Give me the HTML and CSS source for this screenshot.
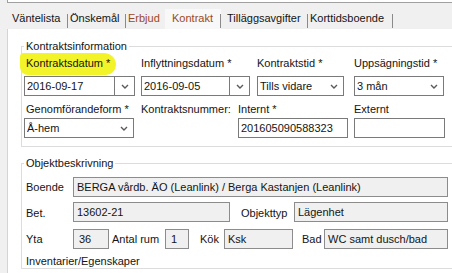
FILE: index.html
```html
<!DOCTYPE html>
<html>

<head>
  <title>Kontrakt</title>
  <link rel="stylesheet" href="styles.css">
</head>

<body>

  <div class="topbar"></div>

  <nav class="tabs">
    <span class="tab tab-wait">Väntelista</span>
    <span class="tab tab-wish">Önskemål</span>
    <span class="tab tab-offer tab-flag">Erbjud</span>
    <span class="tab tab-contract tab-flag tab-active">Kontrakt</span>
    <span class="tab tab-fees">Tilläggsavgifter</span>
    <span class="tab tab-short">Korttidsboende</span>
  </nav>

  <main class="panel">

    <fieldset class="group group-contract">
      <legend>Kontraktsinformation</legend>

      <div class="row row-top">
        <div class="field f-date">
          <label class="first"><span class="marker">Kontraktsdatum *</span></label>
          <div class="combo combo-split">
            <span class="value">2016-09-17</span>
            <span class="drop"><svg width="8" height="5" viewBox="0 0 8 5"><polyline points="1,1 4,4 7,1" /></svg></span>
          </div>
        </div>
        <div class="field f-move">
          <label>Inflyttningsdatum *</label>
          <div class="combo combo-split">
            <span class="value">2016-09-05</span>
            <span class="drop"><svg width="8" height="5" viewBox="0 0 8 5"><polyline points="1,1 4,4 7,1" /></svg></span>
          </div>
        </div>
        <div class="field f-term">
          <label>Kontraktstid *</label>
          <div class="combo">
            <span class="value">Tills vidare</span>
            <span class="drop"><svg width="8" height="5" viewBox="0 0 8 5"><polyline points="1,1 4,4 7,1" /></svg></span>
          </div>
        </div>
        <div class="field f-notice">
          <label>Uppsägningstid *</label>
          <div class="combo">
            <span class="value">3 mån</span>
            <span class="drop"><svg width="8" height="5" viewBox="0 0 8 5"><polyline points="1,1 4,4 7,1" /></svg></span>
          </div>
        </div>
      </div>

      <div class="row row-bottom">
        <div class="field f-form">
          <label class="first">Genomförandeform *</label>
          <div class="combo">
            <span class="value">Å-hem</span>
            <span class="drop"><svg width="8" height="5" viewBox="0 0 8 5"><polyline points="1,1 4,4 7,1" /></svg></span>
          </div>
        </div>
        <div class="field f-number">
          <label>Kontraktsnummer:</label>
        </div>
        <div class="field f-internal">
          <label>Internt *</label>
          <div class="text">201605090588323</div>
        </div>
        <div class="field f-external">
          <label>Externt</label>
          <div class="text"></div>
        </div>
      </div>
    </fieldset>

    <fieldset class="group group-object">
      <legend>Objektbeskrivning</legend>

      <div class="orow">
        <span class="olabel">Boende</span>
        <div class="ro w-home">BERGA vårdb. ÄO (Leanlink) / Berga Kastanjen (Leanlink)</div>
      </div>

      <div class="orow orow-bet">
        <span class="olabel">Bet.</span>
        <div class="ro w-bet">13602-21</div>
        <span class="olabel l-type">Objekttyp</span>
        <div class="ro w-type">Lägenhet</div>
      </div>

      <div class="orow orow-size">
        <span class="olabel">Yta</span>
        <div class="ro w-area">36</div>
        <span class="olabel l-rooms">Antal rum</span>
        <div class="ro w-rooms">1</div>
        <span class="olabel l-kitchen">Kök</span>
        <div class="ro w-kitchen">Ksk</div>
        <span class="olabel l-bath">Bad</span>
        <div class="ro w-bath">WC samt dusch/bad</div>
      </div>

      <div class="olabel extra">Inventarier/Egenskaper</div>
    </fieldset>

  </main>

</body>

</html>
```

FILE: styles.css
```css
body {
  margin: 0;
  width: 452px;
  height: 273px;
  overflow: hidden;
  background: #f0f0f0;
  color: #141414;
  font-family: "Liberation Sans", Arial, sans-serif;
  font-size: 11px;
  line-height: 13px;
}

.topbar {
  height: 2px;
  margin-left: 7px;
  background: #fff;
  border-left: 1px solid #a0a0a0;
  border-bottom: 1px solid #a0a0a0;
}

/* tab strip */

.tabs {
  display: flex;
  height: 20px;
  margin-top: 6px;
  padding-left: 10px;
}

.tab {
  box-sizing: border-box;
  height: 20px;
  padding: 3px 0 0 2px;
  white-space: nowrap;
  background: linear-gradient(#8a8a8a, #8a8a8a) right 5px / 1px 14px no-repeat;
}

.tab-wait {
  width: 58px;
}

.tab-wish {
  width: 58px;
}

.tab-offer {
  width: 39px;
  background: none;
}

.tab-contract {
  width: 56px;
  padding-left: 7px;
}

.tab-fees {
  width: 87px;
  padding-left: 6px;
}

.tab-short {
  width: 85px;
}

.tab-flag {
  color: #9a4a1c;
}

.tab-active {
  background-color: #f8f8f8;
}

/* content panel */

.panel {
  height: 244px;
  margin-left: 7px;
  padding: 11px 0 0 13px;
  background: #fff;
  border-left: 1px solid #d4d4d4;
}

.group {
  margin: 0;
  padding: 4px 0 8px 2px;
  border: 1px solid #dcdcdc;
  border-right: none;
  min-width: 0;
}

.group legend {
  padding: 0 2px;
}

.group-object {
  margin-top: 10px;
  padding: 7px 0 0 2px;
}

/* Kontraktsinformation */

.row {
  display: flex;
}

.row-bottom {
  margin-top: 7px;
}

.field label {
  display: block;
  white-space: nowrap;
}

.row-top label {
  margin-bottom: 6px;
}

.row-bottom label {
  margin-bottom: 2px;
}

.field label.first {
  padding-left: 2px;
}

.marker {
  display: inline-block;
  margin: -4px -6px -5px -6px;
  padding: 4px 6px 5px 6px;
  background: #f3f32a;
  border-radius: 4px 12px 10px 8px;
}

.f-date {
  width: 111px;
  margin-right: 6px;
}

.f-move {
  width: 109px;
  margin-right: 7px;
}

.f-term {
  width: 87px;
  margin-right: 10px;
}

.f-notice {
  width: 90px;
}

.f-form {
  width: 110px;
  margin-right: 7px;
}

.f-number {
  width: 97px;
}

.f-internal {
  width: 110px;
  margin-right: 6px;
}

.f-external {
  width: 91px;
}

.combo {
  display: flex;
  box-sizing: border-box;
  height: 20px;
  border: 1px solid #7a7a7a;
  background: #fff;
}

.combo .value {
  flex: 1;
  padding-left: 2px;
  line-height: 18px;
  white-space: nowrap;
}

.combo .drop {
  display: flex;
  align-items: center;
  justify-content: center;
  width: 18px;
}

.combo-split .drop {
  width: 19px;
  border-left: 1px solid #7a7a7a;
}

.drop svg {
  display: block;
}

.drop polyline {
  fill: none;
  stroke: #5a5a5a;
  stroke-width: 1.4;
}

.text {
  box-sizing: border-box;
  height: 20px;
  padding-left: 2px;
  border: 1px solid #7a7a7a;
  background: #fff;
  line-height: 18px;
}

/* Objektbeskrivning */

.orow {
  display: flex;
  align-items: center;
  height: 20px;
}

.orow-bet {
  margin-top: 5px;
}

.orow-size {
  margin-top: 7px;
}

.olabel {
  box-sizing: border-box;
  width: 49px;
  padding-left: 2px;
  white-space: nowrap;
}

.orow-bet .olabel {
  padding-top: 3px;
}

.orow-size .olabel {
  padding-top: 1px;
}

.ro {
  box-sizing: border-box;
  height: 20px;
  padding: 0 3px;
  border: 1px solid #8c8c8c;
  background: #f0f0f0;
  line-height: 18px;
  white-space: nowrap;
  overflow: hidden;
}

.w-home {
  width: 375px;
}

.w-bet {
  width: 157px;
}

.l-type {
  width: 53px;
  margin-left: 11px;
  padding-left: 0;
}

.w-type {
  width: 154px;
}

.w-area {
  width: 36px;
  padding-left: 5px;
}

.l-rooms {
  width: 53px;
  margin-left: 3px;
  padding-left: 0;
}

.w-rooms {
  width: 24px;
  padding-left: 5px;
}

.l-kitchen {
  width: 24px;
  margin-left: 11px;
  padding-left: 0;
}

.w-kitchen {
  width: 69px;
}

.l-bath {
  width: 22px;
  margin-left: 9px;
  padding-left: 0;
}

.w-bath {
  width: 124px;
}

.extra {
  width: auto;
  margin-top: 6px;
}
```
